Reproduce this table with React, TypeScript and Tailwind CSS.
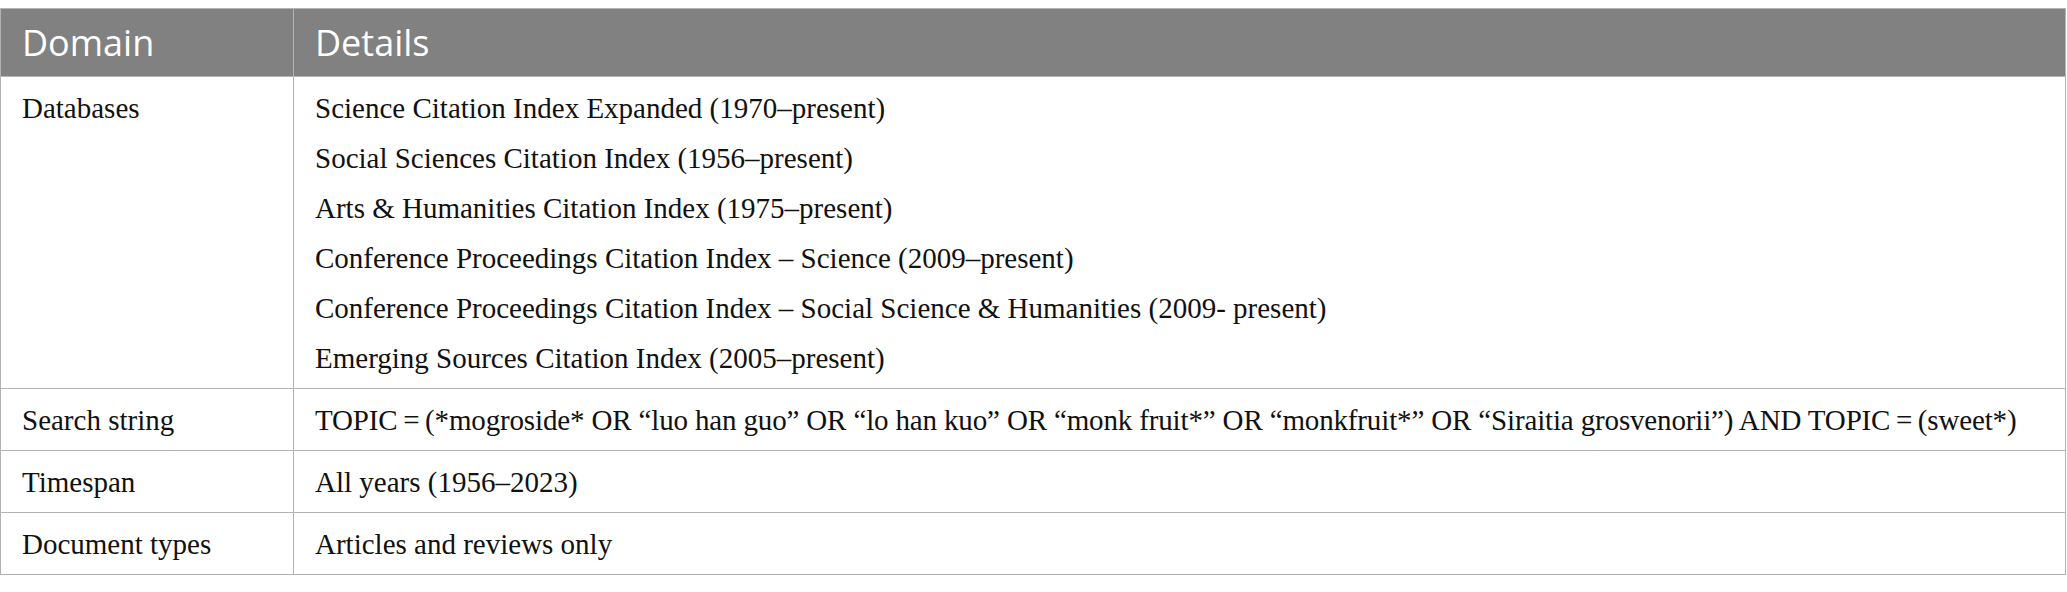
const rows: { domain: string; details: string[]; tight?: boolean }[] = [
  {
    domain: 'Databases',
    details: [
      'Science Citation Index Expanded (1970–present)',
      'Social Sciences Citation Index (1956–present)',
      'Arts & Humanities Citation Index (1975–present)',
      'Conference Proceedings Citation Index – Science (2009–present)',
      'Conference Proceedings Citation Index – Social Science & Humanities (2009- present)',
      'Emerging Sources Citation Index (2005–present)',
    ],
  },
  {
    domain: 'Search string',
    details: [
      'TOPIC\u2009=\u2009(*mogroside* OR “luo han guo” OR “lo han kuo” OR “monk fruit*” OR “monkfruit*” OR “Siraitia grosvenorii”) AND TOPIC\u2009=\u2009(sweet*)',
    ],
    tight: true,
  },
  { domain: 'Timespan', details: ['All years (1956–2023)'] },
  { domain: 'Document types', details: ['Articles and reviews only'] },
]

export default function App() {
  return (
    <div className="bg-white w-[2067px] h-[592px] pt-[8px]">
      <table className="w-[2066px] border-collapse border border-[#b3b3b3]">
        <thead>
          <tr className="bg-[#808180] text-white font-['Open_Sans',sans-serif] text-[36px]">
            <th className="w-[293px] border border-[#b3b3b3] text-left font-normal px-[21px] h-[68px] leading-none">
              Domain
            </th>
            <th className="border border-[#b3b3b3] text-left font-normal px-[21px] leading-none">
              Details
            </th>
          </tr>
        </thead>
        <tbody className="font-['Liberation_Serif',serif] text-[29px] text-[#111]">
          {rows.map((row) => (
            <tr key={row.domain}>
              <td className="border border-[#b3b3b3] align-top px-[21px] pt-[6px] pb-[5px] leading-[50px]">
                {row.domain}
              </td>
              <td className="border border-[#b3b3b3] align-top px-[21px] pt-[6px] pb-[5px] leading-[50px]">
                {row.details.map((d) => (
                  <div key={d} className={row.tight ? 'tracking-[-0.15px]' : ''}>
                    {d}
                  </div>
                ))}
              </td>
            </tr>
          ))}
        </tbody>
      </table>
    </div>
  )
}
